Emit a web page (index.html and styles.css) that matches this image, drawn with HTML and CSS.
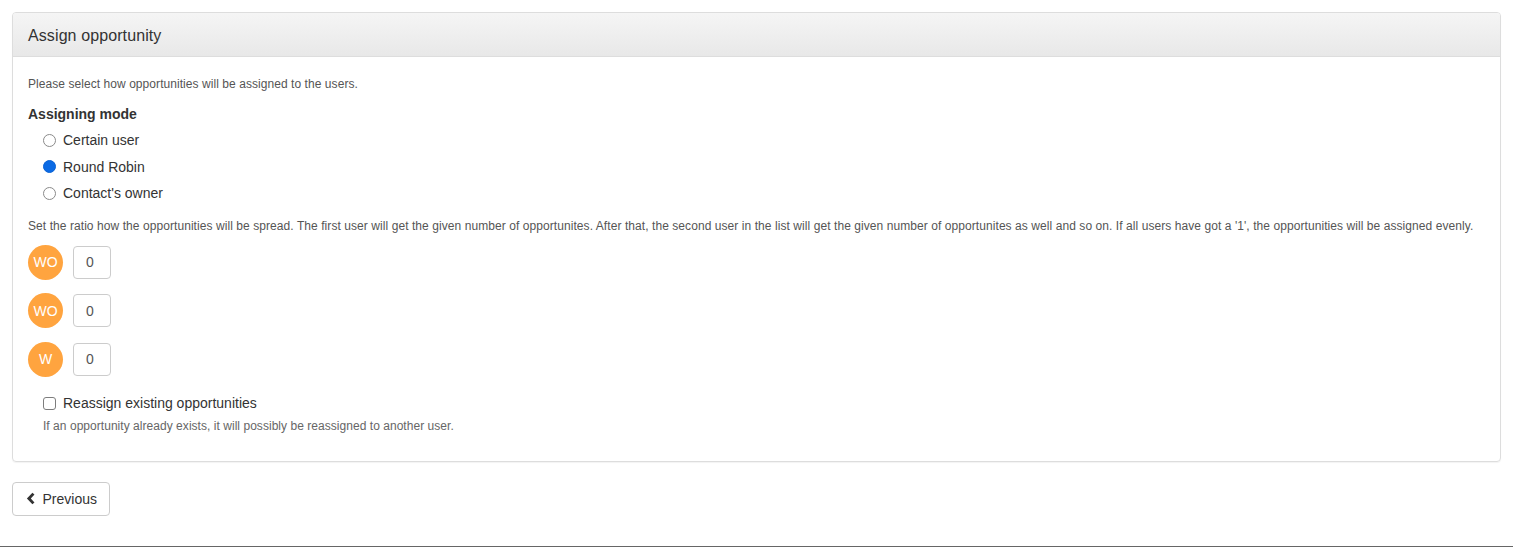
FILE: index.html
```html
<!DOCTYPE html>
<html>
<head>
<meta charset="utf-8">
<link rel="stylesheet" href="styles.css">
</head>
<body>
<div class="page">
  <div class="panel">
    <div class="panel-heading">Assign opportunity</div>
    <div class="panel-body">
      <p class="intro">Please select how opportunities will be assigned to the users.</p>
      <div class="group-label">Assigning mode</div>
      <div class="radios">
        <label class="opt"><span class="radio"></span>Certain user</label>
        <label class="opt"><span class="radio checked"></span>Round Robin</label>
        <label class="opt"><span class="radio"></span>Contact's owner</label>
      </div>
      <p class="ratio">Set the ratio how the opportunities will be spread. The first user will get the given number of opportunites. After that, the second user in the list will get the given number of opportunites as well and so on. If all users have got a '1', the opportunities will be assigned evenly.</p>
      <div class="users">
        <div class="user"><span class="avatar">WO</span><span class="num">0</span></div>
        <div class="user"><span class="avatar">WO</span><span class="num">0</span></div>
        <div class="user"><span class="avatar">W</span><span class="num">0</span></div>
      </div>
      <label class="opt check-row"><span class="checkbox"></span>Reassign existing opportunities</label>
      <p class="help">If an opportunity already exists, it will possibly be reassigned to another user.</p>
    </div>
  </div>
  <div class="actions">
    <button class="btn"><svg class="chev" width="10" height="13" viewBox="0 0 10 13"><path d="M7.8 1.4 L3 6.5 L7.8 11.6" fill="none" stroke="#333" stroke-width="3" stroke-linejoin="miter"/></svg>Previous</button>
  </div>
</div>
<div class="footer-line"></div>
</body>
</html>
```
FILE: styles.css
```css
* { box-sizing: border-box; }
html, body { margin: 0; padding: 0; background: #fff; }
body {
  font-family: "Liberation Sans", Arial, sans-serif;
  font-size: 14px;
  line-height: 20px;
  color: #333;
  height: 547px;
  overflow: hidden;
  position: relative;
}
.page { padding: 12px; }
.panel {
  border: 1px solid #ddd;
  border-radius: 4px;
  box-shadow: 0 1px 1px rgba(0,0,0,0.05);
  margin-bottom: 20px;
}
.panel-heading {
  background: linear-gradient(to bottom, #f5f5f5 0%, #e8e8e8 100%);
  border-bottom: 1px solid #ddd;
  border-radius: 3px 3px 0 0;
  padding: 11px 15px 9px 15px;
  font-size: 16px;
  line-height: 23px;
  color: #333;
  letter-spacing: 0.1px;
}
.panel-body { padding: 17px 15px 16px 15px; }
p { margin: 0; }
.intro { font-size: 12px; line-height: 20px; color: #555; margin-bottom: 10px; letter-spacing: 0.06px; }
.group-label { font-weight: bold; font-size: 14px; line-height: 20px; }
.radios { padding: 3px 0 0 15px; }
.opt {
  display: flex;
  align-items: center;
  height: 26.6px;
  font-size: 14px;
  color: #333;
}
.radio {
  width: 13px; height: 13px;
  border-radius: 50%;
  border: 1px solid #8a8a8a;
  background: #fff;
  margin-right: 7px;
  flex: none;
}
.radio.checked {
  border-color: #0a62d4;
  background: #0b6ae4;
}
.ratio { font-size: 12px; line-height: 20px; color: #555; margin-top: 9px; margin-bottom: 10px; letter-spacing: 0.07px; }
.users { display: flex; flex-direction: column; gap: 15.6px; }
.user { display: flex; align-items: center; height: 33px; }
.avatar {
  width: 35px; height: 35px;
  border-radius: 50%;
  background: #ffa43f;
  color: #fff;
  font-size: 14px;
  display: flex; align-items: center; justify-content: center;
  margin-right: 10px;
  flex: none;
}
.num {
  width: 38px; height: 33px;
  border: 1px solid #ccc;
  border-radius: 4px;
  display: flex; align-items: center;
  padding-left: 12px;
  font-size: 14px;
  color: #555;
}
.opt.check-row { margin-top: 16px; padding-left: 15px; height: 23px; }
.checkbox {
  width: 13px; height: 13px;
  border: 1px solid #7d7d7d;
  border-radius: 3px;
  background: #fff;
  margin-right: 7px;
  flex: none;
}
.help { font-size: 12px; line-height: 20px; color: #666; padding-left: 15px; margin-top: 1px; margin-bottom: 9px; letter-spacing: 0.04px; }
.actions { display: flex; }
.btn {
  font-family: inherit;
  font-size: 14px;
  line-height: 20px;
  color: #333;
  background: #fff;
  border: 1px solid #ccc;
  border-radius: 4px;
  height: 34px;
  width: 98px;
  padding: 6px 12px 6px 13px;
  display: flex; align-items: center;
}
.chev { margin-right: 7px; }
.footer-line {
  position: absolute;
  left: 0; right: 0; bottom: 0;
  height: 1px;
  background: #666;
}
```
